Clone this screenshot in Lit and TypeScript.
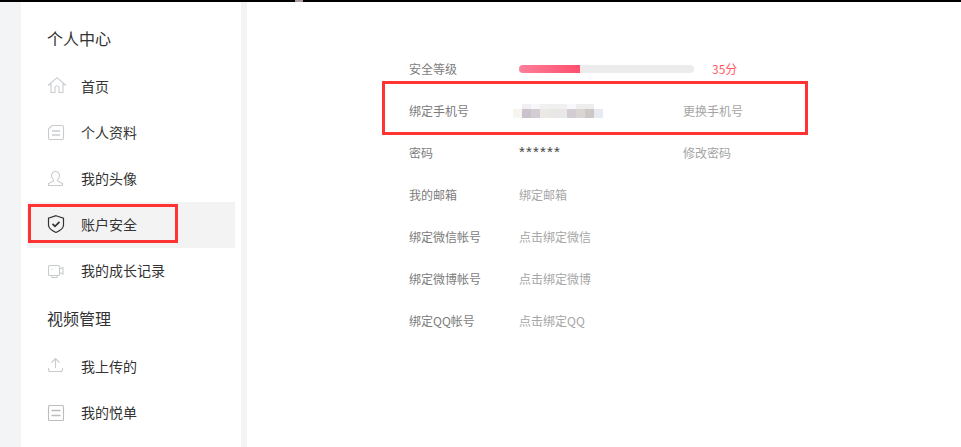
import { LitElement, html, css, svg } from "lit";
import { customElement } from "lit/decorators.js";

const icons: Record<string, unknown> = {
  home: svg`<path d="M1 8.500 10 .7l9 7.800M4 6.500v9h4V11a2 2 0 0 1 4 0v4.500h4v-9"/>`,
  doc: svg`<path d="M5 2.500h10A1.500 1.500 0 0 1 16.500 4v11a1.500 1.500 0 0 1-1.500 1.500H3A1.500 1.500 0 0 1 1.500 15V6Z"/><path d="M5 8h8M5 12h8" stroke-width="1.300"/>`,
  user: svg`<path d="M8.500 2.500a4 4 0 0 1 4 4.300c0 1.800-.8 3.200-2 4.100v1l5 2.600v2h-14v-2l5-2.600v-1c-1.200-.9-2-2.300-2-4.100a4 4 0 0 1 4-4.300Z"/>`,
  shield: svg`<path d="M9 .7 16.500 3.300V10c0 3.500-3.500 5.800-7.500 7.500C5 15.800 1.500 13.500 1.500 10V3.300Z"/><path d="m5.500 8.800 2.500 2.500 4.500-4.500" stroke-width="1.700"/>`,
  video: svg`<rect x="1.500" y="4.500" width="11" height="10" rx="1"/><path d="M12.500 8l3.500-1.500v6.500l-3.500-1.500M5 14.500v2h5v-2M5 8v1"/>`,
  upload: svg`<path d="M8.500 11V1.500M4.500 5.500l4-4 4 4M1.500 11v1.500a2 2 0 0 0 2 2h10a2 2 0 0 0 2-2V11"/>`,
  list: svg`<rect class="dark" x="1.500" y="2.500" width="15" height="15" rx="1"/><path class="dark" d="M4.500 7.500h9M4.500 12.500h9" stroke-width="1.600"/>`,
};

const blurTop = ["#ffffff", "#f1eff4", "#f7f6f9", "#f1f0f1", "#f1f0f1", "#f1f0f1", "#f9f8fa", "#eeedee", "#eeedee", "#ffffff"];
const blurBottom = ["#f7f5f0", "#cbc3cb", "#d2ccd5", "#ece9e4", "#e9e7e5", "#e8e8e9", "#d3ccd2", "#d9d5d2", "#cdc7c7", "#e8eaf2"];

@customElement("nav-item")
class NavItem extends LitElement {
  static properties = { icon: {}, label: {}, active: { type: Boolean, reflect: true } };
  icon = "";
  label = "";
  active = false;
  static styles = css`
    :host { display: flex; align-items: center; height: 46px; padding-left: 20px; }
    :host([active]) { background: #f3f3f3; }
    svg { width: 20px; height: 20px; fill: none; stroke: #c9cccf; stroke-width: 1.100; margin-right: 14px; flex: none; }
    svg .dark { stroke: #bcbcbc; }
    :host([active]) svg { stroke: #333; stroke-width: 1.200; }
    span { font-size: 14px; color: #333; padding-bottom: 2px; }
  `;
  render() {
    return html`<svg viewBox="0 0 20 20">${icons[this.icon]}</svg><span>${this.label}</span>`;
  }
}

@customElement("app-root")
class AppRoot extends LitElement {
  static styles = css`
    :host {
      display: block; width: 961px; height: 447px; overflow: hidden; position: relative;
      background: #f3f4f6;
      font-family: "Noto Sans CJK SC", "Liberation Sans", sans-serif;
    }
    .topbar { height: 2px; background: #000; }
    .layout { display: flex; height: 445px; padding-left: 21px; gap: 6px; }
    .side { width: 220px; flex: none; background: #fff; padding: 14px 6px 0; box-sizing: border-box; }
    .title { font-size: 16px; color: #333; height: 46px; line-height: 44px; margin-bottom: 2px; padding-left: 20px; }
    .title.second { height: 50px; line-height: 48px; margin-bottom: 0; }
    .main { flex: 1; background: #fff; padding: 46px 0 0 162px; }
    .row { display: flex; align-items: center; height: 42px; font-size: 12px; color: #7c7c7c; }
    .label { width: 110px; flex: none; padding-bottom: 1px; }
    .value { width: 164px; flex: none; color: #a6a6a6; padding-bottom: 1px; }
    .action { color: #a4a4a4; padding-bottom: 1px; }
    .pw { display: block; color: #444; font-family: "Liberation Sans", sans-serif; font-size: 15px; letter-spacing: 1.160px; line-height: 1; margin: -3px 0 0 0; }
    .bar { width: 175px; height: 8px; background: #ececec; border-radius: 4px; overflow: hidden; flex: none; }
    .fill { height: 100%; background: linear-gradient(90deg, #ff7f9a, #ff4f6d); }
    .score { margin-left: 18px; color: #ff5a62; padding-bottom: 1px; }
    .blur { display: grid; grid-template-columns: repeat(10, 9px); grid-template-rows: 5px 9px; margin: 0 0 -1px -6px; }
    .blur i { display: block; }
    .mark { position: absolute; border: 3px solid #ff3333; box-sizing: border-box; pointer-events: none; }
    .mark.nav { left: 28px; top: 204px; width: 150px; height: 39px; }
    .mark.phone { left: 382px; top: 81px; width: 426px; height: 54px; }
    .specks { position: absolute; left: 295px; top: 0; width: 8px; height: 2px; background: #a89a9a; }
  `;

  render() {
    return html`
      <div class="topbar"></div>
      <div class="layout">
        <aside class="side">
          <div class="title">个人中心</div>
          <nav-item icon="home" label="首页"></nav-item>
          <nav-item icon="doc" label="个人资料"></nav-item>
          <nav-item icon="user" label="我的头像"></nav-item>
          <nav-item icon="shield" label="账户安全" active></nav-item>
          <nav-item icon="video" label="我的成长记录"></nav-item>
          <div class="title second">视频管理</div>
          <nav-item icon="upload" label="我上传的"></nav-item>
          <nav-item icon="list" label="我的悦单"></nav-item>
        </aside>
        <main class="main">
          <div class="row">
            <div class="label">安全等级</div>
            <div class="bar"><div class="fill" style="width: ${(61 / 175) * 100}%"></div></div>
            <div class="score">35分</div>
          </div>
          <div class="row">
            <div class="label">绑定手机号</div>
            <div class="value">
              <div class="blur">
                ${blurTop.map((c) => html`<i style="background: ${c}"></i>`)}
                ${blurBottom.map((c) => html`<i style="background: ${c}"></i>`)}
              </div>
            </div>
            <div class="action">更换手机号</div>
          </div>
          <div class="row">
            <div class="label">密码</div>
            <div class="value"><span class="pw">******</span></div>
            <div class="action">修改密码</div>
          </div>
          <div class="row"><div class="label">我的邮箱</div><div class="value">绑定邮箱</div></div>
          <div class="row"><div class="label">绑定微信帐号</div><div class="value">点击绑定微信</div></div>
          <div class="row"><div class="label">绑定微博帐号</div><div class="value">点击绑定微博</div></div>
          <div class="row"><div class="label">绑定QQ帐号</div><div class="value">点击绑定QQ</div></div>
        </main>
      </div>
      <div class="mark nav"></div>
      <div class="mark phone"></div>
      <div class="specks"></div>
    `;
  }
}
